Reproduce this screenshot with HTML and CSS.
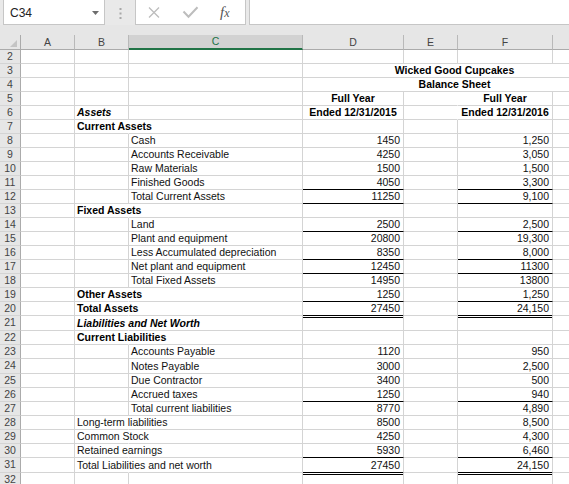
FILE: index.html
```html
<!DOCTYPE html>
<html lang="en">
  <head>
    <meta charset="UTF-8" />
    <meta name="viewport" content="width=device-width, initial-scale=1.0" />
    <title>Balance Sheet</title>
    <link rel="stylesheet" href="styles.css">
  </head>
  <body>
    <!-- formula bar -->
    <div class="formula-bar">
      <div class="name-box">
        <span>C34</span>
        <svg width="7" height="4" viewBox="0 0 7 4"><path d="M0 0h7L3.5 4z" fill="#6d6d6d" /></svg>
      </div>
      <div class="bar-grip">
        <svg width="3" height="11" viewBox="0 0 3 11">
          <rect x="0.5" y="0" width="2" height="2" fill="#a8a8a8" />
          <rect x="0.5" y="4.5" width="2" height="2" fill="#a8a8a8" />
          <rect x="0.5" y="9" width="2" height="2" fill="#a8a8a8" />
        </svg>
      </div>
      <div class="fx-box">
        <svg width="64" height="24" viewBox="0 0 64 24">
          <path d="M13 7.5l10 10M23 7.5l-10 10" stroke="#bdbdbd" stroke-width="1.3" fill="none" />
          <path d="M47.5 11.5l5 5.2 9-9.5" stroke="#bdbdbd" stroke-width="2" fill="none" />
        </svg>
        <span class="fx"><i>f</i><i class="fx-x">x</i></span>
      </div>
      <div class="formula-input"></div>
    </div>
    <div class="bar-gap"></div>

    <!-- sheet -->
    <div class="sheet" id="sheet"></div>

    <script>
      const sheet = document.getElementById("sheet");
      // G and H lie past the window edge, so their letters are not shown
      const letters = ["A", "B", "C", "D", "E", "F", "", ""];

      // n: row number, b/c: labels, d/f: the two year columns
      // spill: label runs over into the next column, line: border under d/f
      const rows = [
        { n: 2 },
        { n: 3, title: "Wicked Good Cupcakes" },
        { n: 4, title: "Balance Sheet" },
        { n: 5, head: true, d: "Full Year", f: "Full Year" },
        { n: 6, head: true, b: "Assets", bStyle: "bold italic", d: "Ended 12/31/2015", f: "Ended 12/31/2016" },
        { n: 7, b: "Current Assets", bStyle: "bold", spill: true },
        { n: 8, c: "Cash", d: "1450", f: "1,250" },
        { n: 9, c: "Accounts Receivable", d: "4250", f: "3,050" },
        { n: 10, c: "Raw Materials", d: "1500", f: "1,500" },
        { n: 11, c: "Finished Goods", d: "4050", f: "3,300", line: "ul" },
        { n: 12, c: "Total Current Assets", d: "11250", f: "9,100", line: "ul" },
        { n: 13, b: "Fixed Assets", bStyle: "bold", spill: true },
        { n: 14, c: "Land", d: "2500", f: "2,500", line: "ul" },
        { n: 15, c: "Plant and equipment", d: "20800", f: "19,300" },
        { n: 16, c: "Less Accumulated depreciation", d: "8350", f: "8,000", line: "ul" },
        { n: 17, c: "Net plant and equipment", d: "12450", f: "11300", line: "ul" },
        { n: 18, c: "Total Fixed Assets", d: "14950", f: "13800" },
        { n: 19, b: "Other Assets", bStyle: "bold", spill: true, d: "1250", f: "1,250", line: "ul" },
        { n: 20, b: "Total Assets", bStyle: "bold", spill: true, d: "27450", f: "24,150", line: "dbl" },
        { n: 21, b: "Liabilities and Net Worth", bStyle: "bold italic", spill: true },
        { n: 22, b: "Current Liabilities", bStyle: "bold", spill: true },
        { n: 23, c: "Accounts Payable", d: "1120", f: "950" },
        { n: 24, c: "Notes Payable", d: "3000", f: "2,500" },
        { n: 25, c: "Due Contractor", d: "3400", f: "500" },
        { n: 26, c: "Accrued taxes", d: "1250", f: "940", line: "ul" },
        { n: 27, c: "Total current liabilities", d: "8770", f: "4,890" },
        { n: 28, b: "Long-term liabilities", spill: true, d: "8500", f: "8,500" },
        { n: 29, b: "Common Stock", spill: true, d: "4250", f: "4,300" },
        { n: 30, b: "Retained earnings", spill: true, d: "5930", f: "6,460", line: "ul" },
        { n: 31, b: "Total Liabilities and net worth", spill: true, d: "27450", f: "24,150", line: "dbl" },
        { n: 32 },
      ];

      function addCell(cls, text) {
        const div = document.createElement("div");
        div.className = cls;
        if (text) div.textContent = text;
        sheet.appendChild(div);
        return div;
      }

      // column headers
      addCell("corner");
      letters.forEach((l) => {
        addCell(l === "C" ? "colhead sel" : "colhead", l);
      });

      rows.forEach((r) => {
        addCell("rowhead", String(r.n));
        addCell("cell"); // A

        let bCls = "cell";
        if (r.bStyle) bCls += " " + r.bStyle;
        if (r.spill) bCls += " spill";
        addCell(bCls, r.b);
        addCell("cell", r.c);

        if (r.title) {
          // centred across D:G
          addCell("cell span bold center", r.title);
          addCell("cell");
          return;
        }

        let valCls = r.head ? "cell bold center" : "cell num";
        if (r.line) valCls += " " + r.line;
        addCell(valCls, r.d);
        addCell(r.head ? "cell spill" : "cell"); // E
        addCell(valCls, r.f);
        addCell("cell"); // G
        addCell("cell"); // H
      });
    </script>
  </body>
</html>
```

FILE: styles.css
```css
* {
  box-sizing: border-box;
}

body {
  margin: 0;
  width: 569px;
  height: 484px;
  overflow: hidden;
  font-family: "Liberation Sans", Arial, sans-serif;
  background: #fff;
}

/* formula bar */
.formula-bar {
  display: flex;
  height: 25px;
  background: #e9e9e9;
}
.name-box {
  display: flex;
  align-items: center;
  justify-content: space-between;
  width: 102px;
  height: 26px;
  margin: -1px 0 0 3px;
  padding: 1px 5px 0 6px;
  background: #fff;
  border: 1px solid #c6c6c6;
  font-size: 12px;
  color: #222;
}
.bar-grip {
  display: flex;
  align-items: center;
  justify-content: center;
  width: 30px;
  padding-top: 1px;
}
.fx-box {
  display: flex;
  align-items: center;
  width: 111px;
  height: 26px;
  margin-top: -1px;
  background: #fff;
  border: 1px solid #c6c6c6;
}
.fx-box svg {
  display: block;
}
.fx {
  margin-left: 20px;
  font-family: "Liberation Serif", "Times New Roman", serif;
  font-size: 15px;
  color: #555;
}
.fx-x {
  font-size: 12px;
}
.formula-input {
  flex: 1;
  height: 26px;
  margin: -1px 0 0 3px;
  background: #fff;
  border: 1px solid #c6c6c6;
  border-right: none;
}
.bar-gap {
  height: 10px;
  background: #e6e6e6;
}

/* sheet grid */
.sheet {
  display: grid;
  grid-template-columns: 21px 54px 54px 174px 101px 54px 95px 54px 54px;
  grid-template-rows: 15px repeat(19, 14px) 15px 14px 14px 15px repeat(6, 14px) 15px 14px;
  width: 661px;
}

.corner {
  position: relative;
  background: #e6e6e6;
  border-right: 1px solid #ababab;
  border-bottom: 1px solid #ababab;
}
.corner::after {
  content: "";
  position: absolute;
  right: 3px;
  bottom: 2px;
  border-style: solid;
  border-width: 0 0 7px 7px;
  border-color: transparent transparent #c4c4c4 transparent;
}

.colhead {
  background: #e6e6e6;
  border-right: 1px solid #b9b9b9;
  border-bottom: 1px solid #ababab;
  text-align: center;
  font-size: 10.5px;
  line-height: 14px;
  color: #444;
}
.colhead.sel {
  background: #d2d2d2;
  border-bottom: 2px solid #217346;
  line-height: 13px;
  color: #217346;
}

.rowhead {
  background: #e6e6e6;
  border-right: 1px solid #ababab;
  border-bottom: 1px solid #d4d4d4;
  text-align: center;
  font-size: 10.5px;
  line-height: 13px;
  color: #444;
}

.cell {
  display: flex;
  align-items: flex-end;
  padding: 0 2px;
  border-right: 1px solid #d4d4d4;
  border-bottom: 1px solid #d4d4d4;
  font-size: 10.5px;
  line-height: 13px;
  white-space: nowrap;
  color: #111;
}
.bold {
  font-weight: bold;
  color: #000;
}
.italic {
  font-style: italic;
}
.center {
  justify-content: center;
}
.num {
  justify-content: flex-end;
  padding-right: 3px;
}
.span {
  grid-column: span 4;
}

/* text running into the next column hides the gridline */
.spill {
  border-right-color: transparent;
}

/* accounting borders */
.ul {
  border-bottom-color: #000;
}
.dbl {
  border-bottom: 3px double #000;
  margin-bottom: -2px;
}
```
